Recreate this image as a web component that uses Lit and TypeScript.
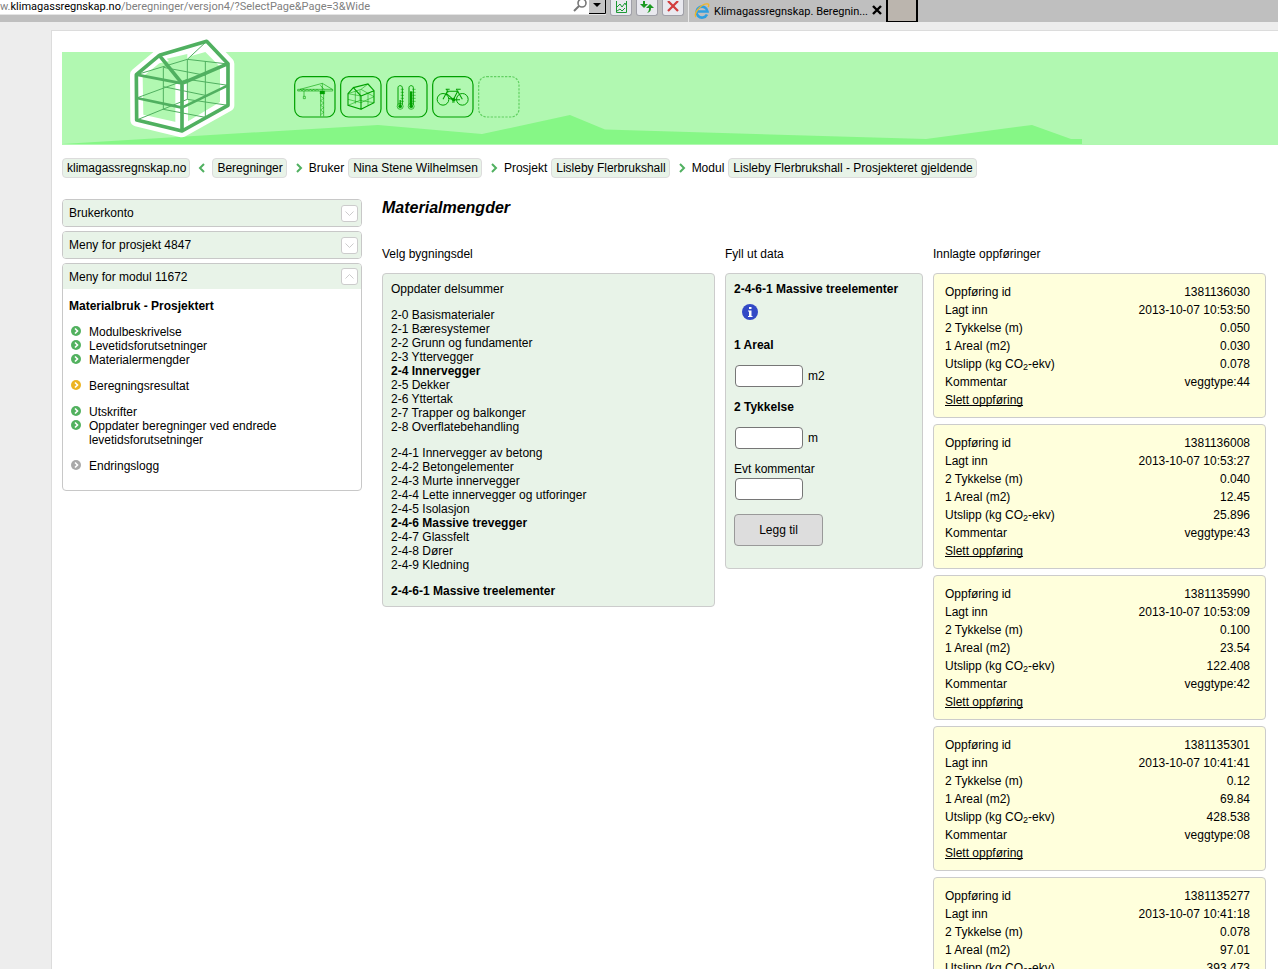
import { LitElement, html, css, svg, nothing } from "lit";
import { customElement, property } from "lit/decorators.js";
import { classMap } from "lit/directives/class-map.js";

interface Entry {
  id: string;
  added: string;
  thickness: string;
  area: string;
  emission: string;
  comment: string;
}

const ENTRIES: Entry[] = [
  { id: "1381136030", added: "2013-10-07 10:53:50", thickness: "0.050", area: "0.030", emission: "0.078", comment: "veggtype:44" },
  { id: "1381136008", added: "2013-10-07 10:53:27", thickness: "0.040", area: "12.45", emission: "25.896", comment: "veggtype:43" },
  { id: "1381135990", added: "2013-10-07 10:53:09", thickness: "0.100", area: "23.54", emission: "122.408", comment: "veggtype:42" },
  { id: "1381135301", added: "2013-10-07 10:41:41", thickness: "0.12", area: "69.84", emission: "428.538", comment: "veggtype:08" },
  { id: "1381135277", added: "2013-10-07 10:41:18", thickness: "0.078", area: "97.01", emission: "393.473", comment: "" },
];

const PART_GROUPS: string[][] = [
  ["Oppdater delsummer"],
  [
    "2-0 Basismaterialer",
    "2-1 Bæresystemer",
    "2-2 Grunn og fundamenter",
    "2-3 Yttervegger",
    "2-4 Innervegger",
    "2-5 Dekker",
    "2-6 Yttertak",
    "2-7 Trapper og balkonger",
    "2-8 Overflatebehandling",
  ],
  [
    "2-4-1 Innervegger av betong",
    "2-4-2 Betongelementer",
    "2-4-3 Murte innervegger",
    "2-4-4 Lette innervegger og utforinger",
    "2-4-5 Isolasjon",
    "2-4-6 Massive trevegger",
    "2-4-7 Glassfelt",
    "2-4-8 Dører",
    "2-4-9 Kledning",
  ],
  ["2-4-6-1 Massive treelementer"],
];

const SELECTED = new Set(["2-4 Innervegger", "2-4-6 Massive trevegger", "2-4-6-1 Massive treelementer"]);

const MENU: { color: string; items: string[] }[] = [
  { color: "#52b15f", items: ["Modulbeskrivelse", "Levetidsforutsetninger", "Materialermengder"] },
  { color: "#ecb423", items: ["Beregningsresultat"] },
  { color: "#52b15f", items: ["Utskrifter", "Oppdater beregninger ved endrede levetidsforutsetninger"] },
  { color: "#a9a9a9", items: ["Endringslogg"] },
];

const CRUMBS: { label?: string; text: string; arrow?: "left" | "right" }[] = [
  { text: "klimagassregnskap.no" },
  { arrow: "left", text: "Beregninger" },
  { arrow: "right", label: "Bruker", text: "Nina Stene Wilhelmsen" },
  { arrow: "right", label: "Prosjekt", text: "Lisleby Flerbrukshall" },
  { arrow: "right", label: "Modul", text: "Lisleby Flerbrukshall - Prosjekteret gjeldende" },
];

const base = css`
  * {
    box-sizing: border-box;
  }
  a {
    color: inherit;
    text-decoration: none;
  }
  svg {
    display: block;
    flex: none;
  }
  ul,
  ol {
    list-style: none;
    margin: 0;
    padding: 0;
  }
`;

@customElement("browser-strip")
class BrowserStrip extends LitElement {
  static styles = [
    base,
    css`
      :host {
        display: flex;
        height: 22px;
        overflow: hidden;
        background: #bfbfbf;
        font-family: Roboto, sans-serif;
        font-size: 11px;
        line-height: 13px;
      }
      .address {
        display: flex;
        width: 606px;
        height: 15px;
        background: #fff;
        border-bottom: 1px solid #e4e4e4;
        color: #808080;
        white-space: pre;
      }
      .url {
        flex: 1;
        display: flex;
      }
      .domain {
        color: #000;
      }
      .tools {
        display: flex;
        gap: 4px;
        padding: 0 4px;
      }
      .tool {
        width: 22px;
        height: 16px;
        padding: 0;
        border: 1px solid #a0a0a8;
        border-top: 0;
        border-radius: 0 0 3px 3px;
        background: #e9e9ef;
      }
      .tab {
        display: flex;
        align-items: center;
        gap: 4px;
        width: 200px;
        padding: 0 5px;
        border-left: 1px solid #e8e8e8;
        border-right: 2px solid #000;
        white-space: nowrap;
      }
      .title {
        flex: 1;
      }
      .new {
        width: 30px;
        background: #bbb5ae;
        border: 1px solid #000;
        border-width: 0 2px 1px 0;
        padding: 0;
      }
    `,
  ];

  render() {
    return html`
      <div class="address">
        <div class="url"><span>w.</span><span class="domain">klimagassregnskap.no</span><span>/beregninger/versjon4/?SelectPage&amp;Page=3&amp;Wide</span></div>
        <svg width="33" height="14" viewBox="0 0 33 14">
          <circle cx="9" cy="3" r="4" fill="none" stroke="#777" stroke-width="1.6" />
          <path d="M6 6 1 11" stroke="#777" stroke-width="2" />
          <path d="M16 0h16v13H16z" fill="#c4c4c4" />
          <path d="M16 13.500h16.500V0" fill="none" stroke="#000" />
          <path d="M20 3h8l-4 4z" fill="#000" />
        </svg>
      </div>
      <div class="tools">
        <button class="tool" aria-label="Kompatibilitetsvisning">
          <svg width="20" height="14" viewBox="0 0 20 14" fill="none" stroke="#1d9a35">
            <path d="M5.500 0v11.500h10V0M6 6l3-3 2 3 3-4 1 2M6 10l3-2 2 2 3-3" />
          </svg>
        </button>
        <button class="tool" aria-label="Oppdater">
          <svg width="20" height="14" viewBox="0 0 20 14" fill="#1d9a22">
            <path d="M6 0h2v3h3L7 7 3 3h3zM13 3l4 4h-3c0 3-1 4-4 5 2-2 2-3 2-5H9z" />
          </svg>
        </button>
        <button class="tool" aria-label="Stopp">
          <svg width="20" height="14" viewBox="0 0 20 14" fill="none" stroke="#d23c3c" stroke-width="2.200">
            <path d="M5 0l10 10M15 0 5 10" />
          </svg>
        </button>
      </div>
      <div class="tab">
        <svg width="16" height="18" viewBox="0 0 16 18" fill="none">
          <path d="M13 12.500A5.500 5.500 0 1 1 13.500 9.500H4" stroke="#2f9fe0" stroke-width="2.600" />
          <path d="M2 15C-1 11 8 1 14 2c1 0 1 2 0 3" stroke="#f0b62c" stroke-width="1.400" />
        </svg>
        <span class="title">Klimagassregnskap. Beregnin...</span>
        <svg width="10" height="18" viewBox="0 0 10 18"><path d="M1 4l8 8M9 4l-8 8" stroke="#000" stroke-width="2.400" /></svg>
      </div>
      <button class="new" aria-label="Ny fane"></button>
    `;
  }
}

const craneIcon = svg`
  <path d="M11 40h105v5H11zM80 45v76M89 45v76M85 22 18 40M85 22l30 18M85 22v22M79 28l11 12" stroke-width="1.800" />
  <path d="M14 45l5-5 5 5 5-5 5 5 5-5 5 5 5-5 5 5 5-5 5 5 5-5 5 5M80 60l9 7-9 7 9 7-9 7 9 7-9 7 9 7-9 7" stroke-width="1.500" />
  <path d="M78 45h14v9H78z" fill="#00a000" />
  <path d="M30 45v16M28 61h6v7h-6z" stroke-width="1.800" />`;
const houseIcon = svg`
  <path d="M24 53 40 35l23 25v40L24 88zM40 35l44-11 18 20v36L63 100M63 60l39-16" stroke-width="3.400" />
  <path d="M24 70l39 10 39-18M24 53l39 7M24 88l36-15 42 7M60 73V43M84 24 63 40l-39 13M63 40l39 22M46 45v38M84 52v36" stroke-width="1.600" />`;
const thermoIcon = svg`
  <path d="M36 86V35c0-8 13-8 13 0v51M69 86V35c0-8 13-8 13 0v51" stroke-width="3" />
  <circle cx="42.500" cy="91" r="9" stroke-width="2" /><circle cx="42.500" cy="91" r="5" fill="#00a000" />
  <circle cx="75.500" cy="91" r="9" stroke-width="2" /><circle cx="75.500" cy="91" r="5" fill="#00a000" />
  <path d="M42.500 91V72" stroke-width="4" /><path d="M75.500 91V46" stroke-width="7" />
  <path d="M44 40h10M44 49h10M44 58h10M44 67h10M44 76h10M79 40h10M79 49h10M79 58h10M79 67h10M79 76h10" stroke-width="1.600" />`;
const bikeIcon = svg`
  <circle cx="33" cy="70" r="17.500" stroke-width="3" /><circle cx="91" cy="70" r="17.500" stroke-width="3" />
  <circle cx="65" cy="71" r="5" fill="#00a000" />
  <path d="M33 70 46 46h31L64 71 43 52M77 46l14 24M79 40l-4 0M64 71l-14-4M44 40l4 10M41 40h12M72 40h14M64 71h20" stroke-width="3.200" />
  <path d="M77 46l-4-6M60 78h8" stroke-width="3" />`;

@customElement("site-banner")
class SiteBanner extends LitElement {
  static styles = [
    base,
    css`
      :host {
        display: grid;
        grid-template-rows: 114px;
        overflow: hidden;
      }
      .band {
        grid-area: 1 / 1;
        align-self: end;
        height: 93px;
        background: #b1f8b1;
        overflow: hidden;
      }
      .content {
        grid-area: 1 / 1;
        display: flex;
        align-items: flex-start;
        padding: 3px 0 0 58px;
      }
      .icons {
        display: flex;
        gap: 4px;
        padding: 42px 0 0 44px;
      }
    `,
  ];

  private icon(name: string, drawing: unknown) {
    return html`<li>
      <a href="#" aria-label=${name}>
        <svg width="42" height="42" viewBox="0 0 126 126" fill="none" stroke="#00a000">
          <rect x="2" y="2" width="121" height="121" rx="24" stroke-width="3.600" />
          ${drawing}
        </svg>
      </a>
    </li>`;
  }

  render() {
    return html`
      <div class="band">
        <svg width="1216" height="93" viewBox="62 52 1216 93">
          <path fill="#86f786" d="M62 144 378 125l104 9 88-19 35 14.500 321 9.500 106-14 39 14h11v5z" />
        </svg>
      </div>
      <div class="content">
        <a href="#" aria-label="Klimagassregnskap">
          <svg width="130" height="110" viewBox="0 0 390 330" fill="none" stroke="#50b060" stroke-linejoin="round">
            <path d="M49 122 118 64l142-42 64 67v125L186 291 50 258z" stroke="#fff" stroke-width="38" />
            <path d="M49 122 118 64l142-42 64 67v125L186 291 50 258z" fill="#fff" stroke="none" />
            <path d="M68 128l50-40 82-18 56-16 44 44v106L204 262v-30l-36 32-98-22z" fill="#b1f8b1" stroke="none" />
            <path d="M166 150h38v122h-38z" fill="#fff" stroke="none" />
            <path d="M118 64 260 22 202 76z" fill="#fff" stroke="none" />
            <path d="M140 74l62-14v16l-50 10z" fill="#b1f8b1" stroke="none" />
            <path d="M260 22 202 76 50 122M202 76l122 14M202 76v120M50 258l152-62 122 18M50 192l152-56 122 18M130 100v126M256 82v166M130 100l126 24M130 158l126 26M130 226l126 24" stroke-width="3" />
            <path d="M118 64 49 122l1 136 136 33V148zM118 64l142-42 64 67v125L186 291M186 148l138-59" stroke-width="11" />
            <path d="M49 122l137 26M50 192l136 29 138-67" stroke-width="8" />
          </svg>
        </a>
        <ul class="icons">
          ${this.icon("Bygg", craneIcon)} ${this.icon("Materialer", houseIcon)} ${this.icon("Energi", thermoIcon)}
          ${this.icon("Transport", bikeIcon)}
          <li>
            <svg width="42" height="42" viewBox="0 0 126 126" fill="none" stroke="#62d062">
              <rect x="2" y="2" width="121" height="121" rx="24" stroke-width="3.600" stroke-dasharray="7 4" />
            </svg>
          </li>
        </ul>
      </div>
    `;
  }
}

@customElement("menu-panel")
class MenuPanel extends LitElement {
  @property() heading = "";
  @property({ type: Boolean, reflect: true }) open = false;

  static styles = [
    base,
    css`
      :host {
        display: block;
        border: 1px solid #c8c8c8;
        border-radius: 4px;
        overflow: hidden;
        background: #fff;
      }
      .head {
        display: flex;
        align-items: center;
        justify-content: space-between;
        width: 100%;
        height: 26px;
        padding: 0 3px 0 6px;
        border: 0;
        background: #e8f3e8;
        color: #000;
        font: inherit;
      }
      :host([open]) .head {
        height: 25px;
      }
      .toggle {
        border: 1px solid #ccc;
        border-radius: 3px;
        background: #fff;
      }
    `,
  ];

  render() {
    return html`
      <button class="head" aria-expanded=${this.open ? "true" : "false"}>
        <span>${this.heading}</span>
        <span class="toggle">
          <svg width="15" height="15" viewBox="0 0 15 15" fill="none" stroke="#ccc">
            <path d=${this.open ? "M3.500 9.500l4-4 4 4" : "M3.500 5.500l4 4 4-4"} />
          </svg>
        </span>
      </button>
      <slot></slot>
    `;
  }
}

@customElement("entry-card")
class EntryCard extends LitElement {
  @property({ attribute: false }) entry!: Entry;

  static styles = [
    base,
    css`
      :host {
        display: block;
        border: 1px solid #ccc;
        border-radius: 4px;
        background: #ffffdc;
        padding: 9px 15px 8px 11px;
      }
      .rows {
        width: 100%;
        border-collapse: collapse;
      }
      th,
      td {
        height: 18px;
        padding: 0;
        line-height: 18px;
        font-weight: normal;
        text-align: left;
      }
      td {
        text-align: right;
      }
      sub {
        font-size: 9px;
        line-height: 0;
        vertical-align: -2px;
      }
      .remove {
        text-decoration: underline;
        text-decoration-skip-ink: none;
      }
    `,
  ];

  render() {
    const e = this.entry;
    return html`
      <table class="rows">
        <tbody>
          <tr><th scope="row">Oppføring id</th><td>${e.id}</td></tr>
          <tr><th scope="row">Lagt inn</th><td>${e.added}</td></tr>
          <tr><th scope="row">2 Tykkelse (m)</th><td>${e.thickness}</td></tr>
          <tr><th scope="row">1 Areal (m2)</th><td>${e.area}</td></tr>
          <tr><th scope="row">Utslipp (kg CO<sub>2</sub>-ekv)</th><td>${e.emission}</td></tr>
          <tr><th scope="row">Kommentar</th><td>${e.comment}</td></tr>
          <tr><th colspan="2"><a class="remove" href="#">Slett oppføring</a></th></tr>
        </tbody>
      </table>
    `;
  }
}

@customElement("app-root")
class AppRoot extends LitElement {
  static styles = [
    base,
    css`
      :host {
        display: flex;
        flex-direction: column;
        height: 100vh;
        overflow: hidden;
        background: #ededed;
        color: #000;
        font-family: "Liberation Sans", Arial, sans-serif;
        font-size: 12px;
        line-height: 14px;
      }
      browser-strip {
        flex: none;
      }
      .sheet {
        flex: 1;
        min-height: 0;
        margin: 8px 0 0 51px;
        padding-left: 10px;
        border: 1px solid #dcdcdc;
        border-width: 1px 0 0 1px;
        background: #fff;
      }
      .crumbs {
        display: flex;
        align-items: center;
        gap: 8px;
        margin-top: 13px;
        white-space: nowrap;
      }
      .crumb {
        display: flex;
        align-items: center;
        gap: 4px;
      }
      .arrow {
        margin-right: 2px;
      }
      .chip {
        padding: 2px 3px 2px 4px;
        border: 1px solid #dcdcdc;
        border-radius: 4px;
        background: #e8f3e8;
      }
      .layout {
        display: grid;
        grid-template-columns: 300px 1fr;
        gap: 20px;
        margin-top: 21px;
        padding-right: 12px;
      }
      .side {
        display: flex;
        flex-direction: column;
        gap: 4px;
      }
      .menu {
        display: flex;
        flex-direction: column;
        gap: 12px;
        padding: 10px 6px 17px;
      }
      .strong {
        font-weight: bold;
      }
      .item {
        display: grid;
        grid-template-columns: 14px 200px;
        gap: 6px;
      }
      .bullet {
        padding: 1px 0 0 2px;
      }
      .title {
        margin: 0 0 30px;
        font-size: 16px;
        line-height: 18px;
        font-style: italic;
      }
      .columns {
        display: grid;
        grid-template-columns: 1fr 198px 1fr;
        align-items: start;
        gap: 10px;
      }
      .label {
        margin: 0 0 12px;
        font-size: 12px;
        font-weight: normal;
      }
      .box {
        padding: 8px;
        border: 1px solid #ccc;
        border-radius: 4px;
        background: #e8f3e8;
      }
      .parts {
        display: flex;
        flex-direction: column;
        gap: 12px;
      }
      .form {
        display: flex;
        flex-direction: column;
        align-items: flex-start;
        padding-bottom: 22px;
      }
      .info {
        margin: 8px 0 18px 8px;
        padding: 0;
        border: 0;
        background: none;
      }
      .field {
        display: flex;
        align-items: center;
        gap: 5px;
        margin: 13px 0 13px 1px;
      }
      .input {
        width: 68px;
        height: 22px;
        padding: 2px 4px;
        border: 1px solid #767676;
        border-radius: 4px;
        background: #fff;
        font: inherit;
      }
      .note {
        margin: 2px 0 14px 1px;
      }
      .submit {
        width: 89px;
        height: 32px;
        border: 1px solid #999;
        border-radius: 4px;
        background: #ddd;
        color: #000;
        font: inherit;
      }
      .entries {
        display: flex;
        flex-direction: column;
        gap: 6px;
      }
    `,
  ];

  private arrow(dir?: "left" | "right") {
    if (!dir) return nothing;
    return html`<svg class="arrow" width="8" height="10" viewBox="0 0 8 10" fill="none" stroke="#50b060" stroke-width="2">
      <path d=${dir === "left" ? "M6 1 2 5l4 4" : "M2 1l4 4-4 4"} />
    </svg>`;
  }

  private menuItem(text: string, color: string) {
    return html`<li class="item">
      <span class="bullet">
        <svg width="10" height="10" viewBox="0 0 10 10">
          <circle cx="5" cy="5" r="5" fill=${color} />
          <path d="M4 2.500 6.500 5 4 7.500" fill="none" stroke="#fff" stroke-width="1.600" />
        </svg>
      </span>
      <a href="#">${text}</a>
    </li>`;
  }

  render() {
    return html`
      <browser-strip></browser-strip>
      <div class="sheet">
        <site-banner></site-banner>
        <nav class="crumbs">
          ${CRUMBS.map(
            (c) => html`<span class="crumb">
              ${this.arrow(c.arrow)} ${c.label ? html`<span>${c.label}</span>` : nothing}
              <a class="chip" href="#">${c.text}</a>
            </span>`,
          )}
        </nav>
        <div class="layout">
          <aside class="side">
            <menu-panel heading="Brukerkonto"></menu-panel>
            <menu-panel heading="Meny for prosjekt 4847"></menu-panel>
            <menu-panel heading="Meny for modul 11672" open>
              <div class="menu">
                <div class="strong">Materialbruk - Prosjektert</div>
                ${MENU.map((g) => html`<ul>${g.items.map((t) => this.menuItem(t, g.color))}</ul>`)}
              </div>
            </menu-panel>
          </aside>
          <main>
            <h1 class="title">Materialmengder</h1>
            <div class="columns">
              <section>
                <h2 class="label">Velg bygningsdel</h2>
                <div class="box parts">
                  ${PART_GROUPS.map(
                    (g) => html`<ul>
                      ${g.map((t) => html`<li class=${classMap({ strong: SELECTED.has(t) })}><a href="#">${t}</a></li>`)}
                    </ul>`,
                  )}
                </div>
              </section>
              <section>
                <h2 class="label">Fyll ut data</h2>
                <form class="box form">
                  <div class="strong">2-4-6-1 Massive treelementer</div>
                  <button class="info" type="button" aria-label="Informasjon">
                    <svg width="16" height="16" viewBox="0 0 16 16">
                      <circle cx="8" cy="8" r="8" fill="#3349c6" />
                      <path d="M7 3h2.500v2H7zM6 6.500h3.500V12h1v1H6v-1h1V7.500H6z" fill="#fff" />
                    </svg>
                  </button>
                  <label class="strong" for="area">1 Areal</label>
                  <div class="field"><input class="input" id="area" type="text" /><span>m2</span></div>
                  <label class="strong" for="thickness">2 Tykkelse</label>
                  <div class="field"><input class="input" id="thickness" type="text" /><span>m</span></div>
                  <label for="comment">Evt kommentar</label>
                  <input class="input note" id="comment" type="text" />
                  <button class="submit" type="button">Legg til</button>
                </form>
              </section>
              <section>
                <h2 class="label">Innlagte oppføringer</h2>
                <div class="entries">${ENTRIES.map((e) => html`<entry-card .entry=${e}></entry-card>`)}</div>
              </section>
            </div>
          </main>
        </div>
      </div>
    `;
  }
}
